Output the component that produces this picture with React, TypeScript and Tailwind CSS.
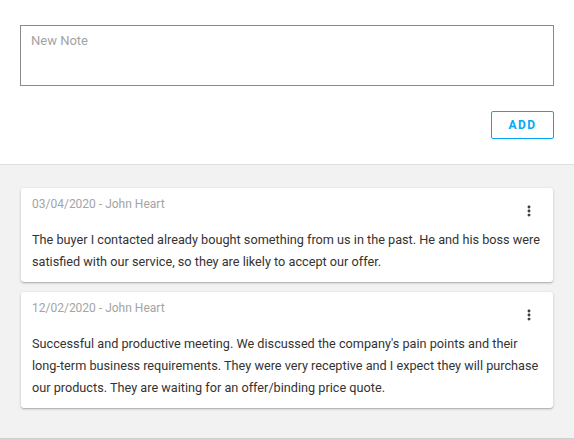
import { MoreVertical } from 'lucide-react';

const notes = [
  {
    id: 1,
    date: '03/04/2020',
    author: 'John Heart',
    text: 'The buyer I contacted already bought something from us in the past. He and his boss were satisfied with our service, so they are likely to accept our offer.',
  },
  {
    id: 2,
    date: '12/02/2020',
    author: 'John Heart',
    text: "Successful and productive meeting. We discussed the company's pain points and their long-term business requirements. They were very receptive and I expect they will purchase our products. They are waiting for an offer/binding price quote.",
  },
];

function NoteCard({ date, author, text }: { date: string; author: string; text: string }) {
  return (
    <div className="bg-white rounded-[3px] shadow-[0_1px_3px_rgba(0,0,0,0.2),0_1px_1px_rgba(0,0,0,0.14)] px-[11px] pt-[8px] pb-[9px]">
      <div className="flex items-start justify-between">
        <div className="text-[12px] leading-[16px] text-[#a4a4a4]">
          {date} - {author}
        </div>
        <button className="mt-[8px] mr-[6px] text-[#333]">
          <MoreVertical className="w-[14px] h-[14px]" strokeWidth={3} />
        </button>
      </div>
      <p className="mt-[11px] text-[12.7px] leading-[22px] text-[#333]">{text}</p>
    </div>
  );
}

export default function App() {
  return (
    <div className="w-[574px] h-[439px] font-['Roboto',sans-serif] bg-white">
      <div className="px-[20px] pt-[25px] pb-[25px] border-b border-[#dedede]">
        <div className="h-[61px] border border-[#8a8a8a] px-[10px] pt-[5px] text-[13px] text-[#a3a3a3]">
          New Note
        </div>
        <div className="flex justify-end mt-[25px]">
          <button className="w-[63px] h-[28px] border border-[#03a9f4] rounded-[2px] text-[#03a9f4] text-[12px] font-bold tracking-[1.5px]">
            ADD
          </button>
        </div>
      </div>
      <div className="bg-[#f2f2f2] h-[274px] px-[21px] pt-[23px] flex flex-col gap-[10px] border-b border-[#d0d0d0]">
        {notes.map((n) => (
          <NoteCard key={n.id} date={n.date} author={n.author} text={n.text} />
        ))}
      </div>
    </div>
  );
}
